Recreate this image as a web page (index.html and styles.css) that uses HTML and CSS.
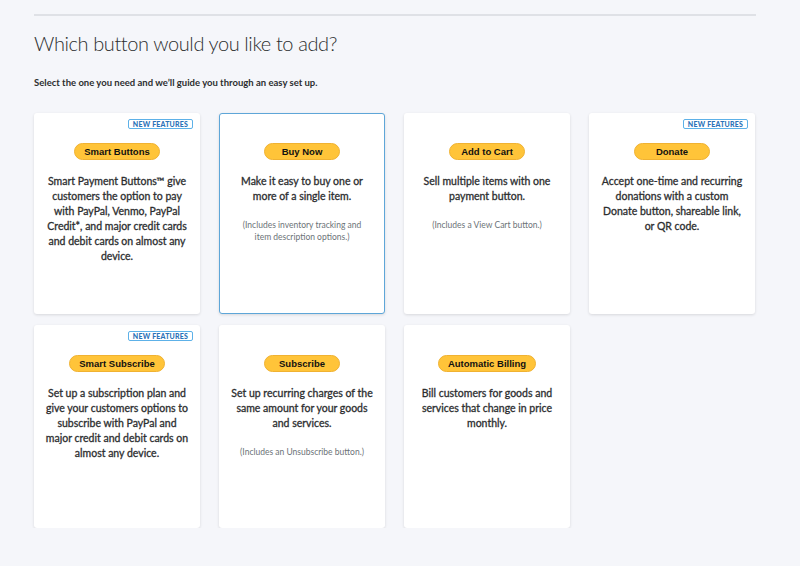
FILE: index.html
```html
<!DOCTYPE html>
<html>
<head>
<meta charset="utf-8">
<link rel="stylesheet" href="styles.css">
</head>
<body>
<main class="page">
  <hr class="rule">
  <h1 class="title">Which button would you like to add?</h1>
  <p class="subtitle">Select the one you need and we’ll guide you through an easy set up.</p>
  <div class="grid">
    <div class="card">
      <span class="badge">NEW FEATURES</span>
      <span class="pill">Smart Buttons</span>
      <p class="desc">Smart Payment Buttons™ give customers the option to pay with PayPal, Venmo, PayPal Credit*, and major credit cards and debit cards on almost any device.</p>
    </div>
    <div class="card selected">
      <span class="pill">Buy Now</span>
      <p class="desc">Make it easy to buy one or more of a single item.</p>
      <p class="note">(Includes inventory tracking and item description options.)</p>
    </div>
    <div class="card">
      <span class="pill">Add to Cart</span>
      <p class="desc">Sell multiple items with one payment button.</p>
      <p class="note">(Includes a View Cart button.)</p>
    </div>
    <div class="card">
      <span class="badge">NEW FEATURES</span>
      <span class="pill">Donate</span>
      <p class="desc">Accept one-time and recurring donations with a custom Donate button, shareable link, or QR code.</p>
    </div>
    <div class="card">
      <span class="badge">NEW FEATURES</span>
      <span class="pill">Smart Subscribe</span>
      <p class="desc">Set up a subscription plan and give your customers options to subscribe with PayPal and major credit and debit cards on almost any device.</p>
    </div>
    <div class="card">
      <span class="pill">Subscribe</span>
      <p class="desc">Set up recurring charges of the same amount for your goods and services.</p>
      <p class="note">(Includes an Unsubscribe button.)</p>
    </div>
    <div class="card">
      <span class="pill">Automatic Billing</span>
      <p class="desc">Bill customers for goods and services that change in price monthly.</p>
    </div>
  </div>
</main>
</body>
</html>
```
FILE: styles.css
```css
* { box-sizing: border-box; }
html, body { margin: 0; padding: 0; }
body {
  background: #f5f6fa;
  font-family: Lato, "Open Sans", sans-serif;
  color: #2c2e2f;
}
.page {
  width: 722px;
  margin-left: 34px;
  padding-top: 14px;
}
.rule {
  margin: 0;
  border: 0;
  height: 2px;
  background: #dfe1e6;
}
.title {
  margin: 13px 0 0;
  font-size: 20px;
  line-height: 28px;
  font-weight: 300;
  letter-spacing: -0.4px;
  color: #2c2e2f;
}
.subtitle {
  margin: 19px 0 0;
  font-size: 9.5px;
  line-height: 14px;
  font-weight: 700;
  color: #2c2e2f;
}
.grid {
  margin-top: 23px;
  display: grid;
  grid-template-columns: repeat(4, 166px);
  grid-template-rows: 201px 203px;
  column-gap: 19px;
  row-gap: 11px;
}
.card {
  position: relative;
  background: #fff;
  border-radius: 3px;
  box-shadow: 0 1px 3px rgba(0, 0, 0, 0.12);
  display: flex;
  flex-direction: column;
  align-items: center;
  padding: 30px 11px 0;
  text-align: center;
}
.card.selected {
  border: 1px solid #5ea6d8;
  padding-top: 29px;
}
.badge {
  position: absolute;
  top: 6px;
  right: 7px;
  height: 10px;
  padding: 0 4px;
  border: 1px solid #5db1e8;
  border-radius: 2px;
  font-size: 7px;
  font-weight: 900;
  line-height: 8px;
  color: #2a72b8;
  letter-spacing: 0.2px;
}
.pill {
  min-width: 76px;
  height: 17px;
  padding: 0 9px;
  border-radius: 9px;
  background: #ffc439;
  border: 1px solid #f0b232;
  font-family: "Liberation Sans", Arial, sans-serif;
  font-weight: 700;
  font-size: 9.5px;
  line-height: 15px;
  color: #111;
}
.desc {
  margin: 14px 0 0;
  font-size: 10.5px;
  line-height: 15px;
  font-weight: 400;
  -webkit-text-stroke: 0.3px #2c2e2f;
  color: #2c2e2f;
}
.note {
  max-width: 128px;
  margin: 15px 0 0;
  font-size: 8.5px;
  line-height: 12px;
  color: #6c7378;
  font-weight: 400;
}
```
